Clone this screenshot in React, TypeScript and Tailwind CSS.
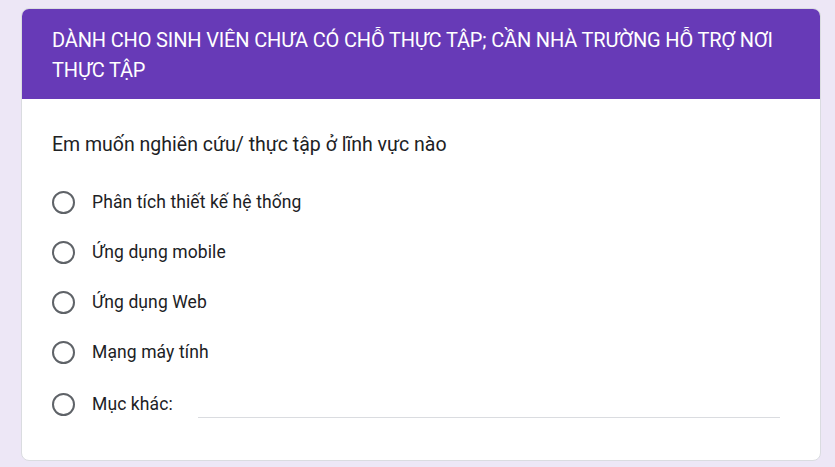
const options = [
  "Phân tích thiết kế hệ thống",
  "Ứng dụng mobile",
  "Ứng dụng Web",
  "Mạng máy tính",
];

const Radio = () => (
  <span className="w-[23px] h-[23px] rounded-full border-2 border-[#5f6368] shrink-0" />
);

export default function App() {
  return (
    <div
      className="w-[835px] h-[467px] bg-[#ede7f6] pt-2 pl-[21px] overflow-hidden"
      style={{ fontFamily: "Roboto, 'Noto Sans', sans-serif" }}
    >
      <div className="w-[800px] h-[453px] bg-white rounded-lg border border-[#dadce0] overflow-hidden flex flex-col">
        <div className="bg-[#673ab7] text-white text-[20px] tracking-[-0.15px] leading-[30px] pl-[30px] pr-[36px] pt-[16px] h-[90px]">
          DÀNH CHO SINH VIÊN CHƯA CÓ CHỖ THỰC TẬP; CẦN NHÀ TRƯỜNG HỖ TRỢ NƠI THỰC TẬP
        </div>
        <div className="pl-[30px] pr-10 pt-[34px]">
          <div className="text-[19.5px] text-[#202124] leading-6">
            Em muốn nghiên cứu/ thực tập ở lĩnh vực nào
          </div>
          <div className="flex flex-col mt-[34px] gap-[27px]">
            {options.map((o) => (
              <div key={o} className="flex items-center gap-[17px] h-[23px]">
                <Radio />
                <span className="text-[17.5px] text-[#202124] tracking-[0.1px]">{o}</span>
              </div>
            ))}
            <div className="flex items-center gap-[17px] h-[23px] mt-[2px]">
              <Radio />
              <span className="text-[17.5px] text-[#202124] tracking-[0.1px]">Mục khác:</span>
              <span className="flex-1 border-b border-[#dadce0] self-end -mb-[2px] ml-[8px] h-px" />
            </div>
          </div>
        </div>
      </div>
    </div>
  );
}
